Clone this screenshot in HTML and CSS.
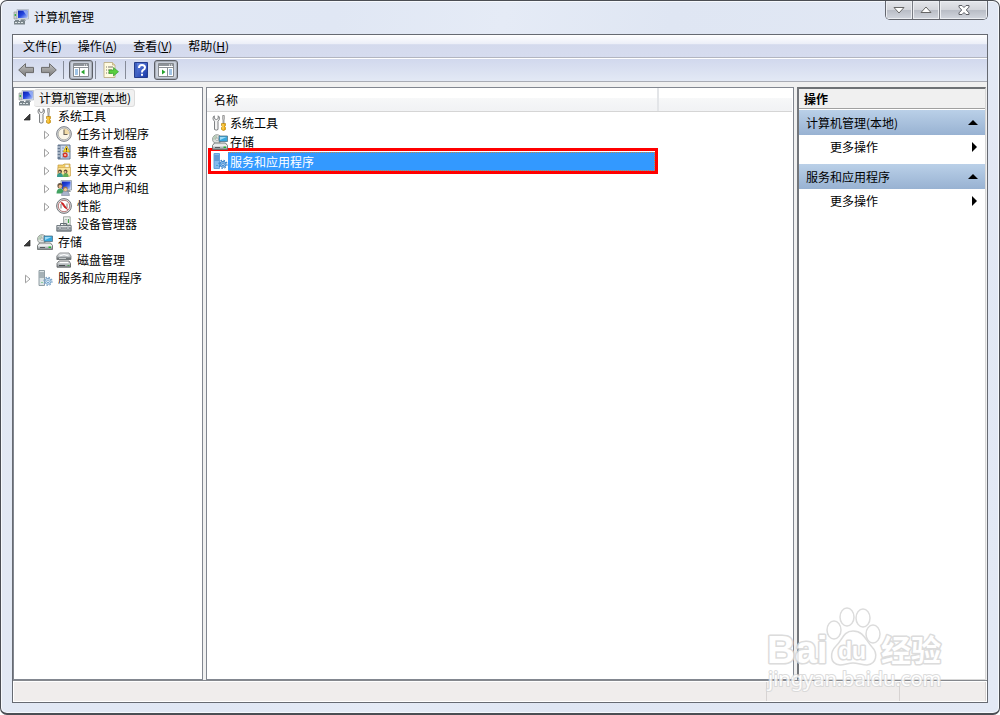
FILE: index.html
```html
<!DOCTYPE html>
<html lang="zh-CN">
<head>
<meta charset="utf-8">
<title>计算机管理</title>
<link rel="stylesheet" href="styles.css">
</head>
<body>
<svg class="sprite" aria-hidden="true">
  <defs>
    <linearGradient id="g-screen" x1="0" y1="0" x2="1" y2="1"><stop offset="0" stop-color="#0a1fae"/><stop offset=".5" stop-color="#2547e0"/><stop offset="1" stop-color="#b8cdfa"/></linearGradient>
    <linearGradient id="g-arrow" x1="0" y1="0" x2="0" y2="1"><stop offset="0" stop-color="#c4c4c4"/><stop offset="1" stop-color="#777"/></linearGradient>
    <linearGradient id="g-help" x1="0" y1="0" x2="1" y2="1"><stop offset="0" stop-color="#6a8be6"/><stop offset="1" stop-color="#1535a5"/></linearGradient>
    <linearGradient id="g-metal" x1="0" y1="0" x2="0" y2="1"><stop offset="0" stop-color="#f2f4f5"/><stop offset="1" stop-color="#858c91"/></linearGradient>
    <symbol id="computer" viewBox="0 0 16 16">
      <path d="M1 3h3v7H1z" fill="#c9cfcd" stroke="#8a918f" stroke-width=".6"/><path d="M1.600 5h1.500v2H1.600z" fill="#39b54a"/>
      <path d="M4 .5h11.500V10H4z" fill="#dde2e8" stroke="#a9b1bb" stroke-width=".7"/><path d="M5 1.500h9.500V9H5z" fill="url(#g-screen)"/><path d="M10 1.500L14.500 8V1.500z" fill="#8fa9f3"/>
      <path d="M8 10h4l1 2H7z" fill="#9ba4aa"/><path d="M2 11h4v1h2v-1h3v1h1v3.500H1V12h1z" fill="#7b868c"/><path d="M2 13h2v1H2zm3 0h2v1H5zm3 0h2v1H8z" fill="#dde4e6"/>
    </symbol>
    <symbol id="tools" viewBox="0 0 16 16">
      <path d="M2.300.8C.6 1.800.5 4.800 2.500 6.200V14.500q1.700 1.300 3.500 0V6.200C8 4.800 7.900 1.800 6.200.8V3.600L4.300 4.600 2.300 3.600z" fill="#f4f4f4" stroke="#6f7375" stroke-width=".9"/>
      <path d="M10.700.5h1.600v3.500l-.3 1v3.500h-1V5l-.3-1z" fill="#e4e4e4" stroke="#777" stroke-width=".7"/><path d="M9.500 8.500h4v2l-.8 1 .8 1v2q-2 2-4 0v-2l.8-1-.8-1z" fill="#f0ad12" stroke="#b07c00" stroke-width=".6"/><path d="M11 9v5.500" stroke="#ffe27b"/>
    </symbol>
    <symbol id="clock" viewBox="0 0 16 16">
      <circle cx="8" cy="8" r="7.400" fill="#d3d6d9" stroke="#777b81" stroke-width=".9"/><circle cx="8" cy="8" r="5.800" fill="#faf6e8" stroke="#a6a6a0" stroke-width=".7"/><path d="M8 8V2.500A5.500 5.500 0 0 1 13.400 8z" fill="#edcc83" opacity=".65"/><path d="M8 3.500v5h3.500" fill="none" stroke="#6b6459" stroke-width="1.100"/>
    </symbol>
    <symbol id="events" viewBox="0 0 16 16">
      <path d="M2 1h12v14H2z" fill="#c9d7ec" stroke="#526783" stroke-width=".9"/><path d="M2 1h2.500v14H2z" fill="#657991"/><path d="M1 3h3M1 6h3M1 9h3M1 12h3" stroke="#e2e9f1"/><path d="M6 4h2M6 7h1M6 10h2M6 13h7" stroke="#6c8db9" stroke-width=".8"/>
      <path d="M10.500 1.800L14 8H7z" fill="#ffda29" stroke="#a88816" stroke-width=".6"/><path d="M10.500 4v2.200m0 .5v.8" stroke="#222" stroke-width=".9"/><circle cx="9.200" cy="11" r="2.500" fill="#d63224"/><path d="M8.200 10l2 2m0-2l-2 2" stroke="#fff" stroke-width=".7"/>
    </symbol>
    <symbol id="shared" viewBox="0 0 16 16">
      <path d="M2 3h5l1-1h6v12H2z" fill="#f2cf68" stroke="#c39a3c" stroke-width=".7"/><path d="M9 2.500h4V6H9z" fill="#f9f6e7" stroke="#cdaa51" stroke-width=".5"/><path d="M2 5.500h12.500V14H2z" fill="#fbe49a" stroke="#cca047" stroke-width=".6"/>
      <path d="M1 15q0-4 3-4t3 4z" fill="#369c91"/><path d="M7 15q0-4 2.800-4t2.700 4z" fill="#63ac55"/><circle cx="4" cy="9.500" r="1.900" fill="#544232"/><circle cx="9.600" cy="9.500" r="1.900" fill="#6b5037"/><circle cx="3.700" cy="10" r="1.100" fill="#e9c29b"/><circle cx="9.300" cy="10" r="1.100" fill="#e9c29b"/>
    </symbol>
    <symbol id="users" viewBox="0 0 16 16">
      <path d="M5 .5h10.500V10H5z" fill="#d5dce4" stroke="#8d99a7" stroke-width=".8"/><path d="M6 1.500h8.500V9H6z" fill="url(#g-screen)"/><path d="M10.500 10h3l1.500 2h-5z" fill="#8b969d"/>
      <path d="M.5 13.500q.2-5 3.800-5 3.200 0 3.700 5z" fill="#42a261"/><circle cx="4" cy="5.700" r="2.600" fill="#6d5842"/><circle cx="4.300" cy="6.500" r="1.700" fill="#e9b486"/><path d="M5.500 15.500q.4-4.500 4-4.500t4 4.500z" fill="#a9b4cc" stroke="#687487" stroke-width=".5"/><circle cx="9.300" cy="9" r="2.400" fill="#9b7951"/><circle cx="9.500" cy="9.600" r="1.600" fill="#f0c59b"/>
    </symbol>
    <symbol id="performance" viewBox="0 0 16 16">
      <circle cx="8" cy="8" r="7.400" fill="#dcdedf" stroke="#65696d" stroke-width=".9"/><circle cx="8" cy="8" r="5.700" fill="#fff" stroke="#a54b4b" stroke-width=".7"/><path d="M5 10.500V6m6 4V5.500" stroke="#666" stroke-width=".9"/><path d="M5 4.500l2 .5 4.500 6.500-3-2z" fill="#d21d1d" stroke="#c41919" stroke-width=".7"/>
    </symbol>
    <symbol id="device" viewBox="0 0 16 16">
      <path d="M7.500.8h6.700V9H7.500z" fill="#edf2ee" stroke="#8b9691" stroke-width=".8"/><path d="M9 3.500h2V9H9z" fill="#fff" stroke="#7d8983" stroke-width=".5"/><path d="M12 3h1v4h-1z" fill="#43a94b"/><path d="M4.500 9.500v-2h6v2" fill="none" stroke="#656e75"/><path d="M.8 9.500h14.400v5.700H.8z" fill="url(#g-metal)" stroke="#535e66" stroke-width=".8"/><path d="M1 12h14" stroke="#59636a" stroke-width=".7"/><path d="M3 11h2v2H3zm8 0h2v2h-2z" fill="#e6eaec" stroke="#59636a" stroke-width=".4"/>
    </symbol>
    <symbol id="storage" viewBox="0 0 16 16">
      <circle cx="5" cy="5.200" r="4.500" fill="#dde0de" stroke="#858b88" stroke-width=".8"/><path d="M5 .9A4.300 4.300 0 0 0 1 6l4-1z" fill="#b9ccb8"/><circle cx="5" cy="5.200" r="1.300" fill="#fff" stroke="#868b87" stroke-width=".6"/><path d="M7 2h8.500v5.500H7z" fill="#37a7dd" stroke="#537487" stroke-width=".8"/><path d="M8 3h6.500L8 6z" fill="#9fdcf7"/>
      <path d="M2.500 9h11l2 2.500v4H.5v-4z" fill="#e6e8e8" stroke="#59615f" stroke-width=".8"/><path d="M1 11.500h14V15H1z" fill="url(#g-metal)"/><path d="M11.500 12.500h2.500v1.500h-2.500z" fill="#21b830"/><path d="M3 13.500h5" stroke="#555c60"/>
    </symbol>
    <symbol id="disk" viewBox="0 0 16 16">
      <path d="M3.500 1h9.500l2 3v3.500H.8V4z" fill="url(#g-metal)" stroke="#777a7c" stroke-width=".8"/><path d="M3.500 4q4.500-3 9 0" fill="none" stroke="#fff"/><path d="M1 5.500h14V8H1z" fill="#74797b"/><path d="M3 6.500h7" stroke="#d6d9da" stroke-width=".8"/>
      <path d="M3 9h10l1.500 2.500v3.700H1v-3.700z" fill="url(#g-metal)" stroke="#55595b" stroke-width=".8"/><path d="M4 10.500h8" stroke="#fff"/><path d="M3 13.500h6" stroke="#474b4d"/><path d="M11.500 13h2v1h-2z" fill="#4aa350"/>
    </symbol>
    <symbol id="services" viewBox="0 0 16 16">
      <path d="M2 .5h5.500v15H2z" fill="#dce4e6" stroke="#86949b" stroke-width=".9"/><path d="M2.500 3h4.500M2.500 5h4.500M2.500 7h4.500" stroke="#63747d" stroke-width=".9"/><path d="M4.500 12h1v1h-1z" fill="#3ab655"/><circle cx="11" cy="11.300" r="3" fill="#d9ecfc" stroke="#7ba4c8"/><circle cx="11" cy="11.300" r="4" fill="none" stroke="#7ba4c8" stroke-width="1.200" stroke-dasharray="1.570 1.570"/><circle cx="11" cy="11.300" r="1.300" fill="#fff" stroke="#5b91bf" stroke-width=".8"/>
    </symbol>
    <symbol id="services-selected" viewBox="0 0 16 16">
      <path d="M2 .5h5.500v15H2z" fill="#85bbef" stroke="#5a9ad8" stroke-width=".9"/><path d="M2.500 3h4.500M2.500 5h4.500M2.500 7h4.500" stroke="#3474b5" stroke-width=".9"/><path d="M4.500 12h1v1h-1z" fill="#1d9b9d"/><circle cx="11" cy="11.300" r="3" fill="#90c5f6" stroke="#3f86cb"/><circle cx="11" cy="11.300" r="4" fill="none" stroke="#3f86cb" stroke-width="1.200" stroke-dasharray="1.570 1.570"/><circle cx="11" cy="11.300" r="1.300" fill="#c5e2ff" stroke="#3478bb" stroke-width=".8"/>
    </symbol>
    <symbol id="back" viewBox="0 0 16 16"><path d="M.7 8L7.500 1.700v3.700h8v5.200h-8v3.700z" fill="url(#g-arrow)" stroke="#6b6b6b" stroke-linejoin="round"/></symbol>
    <symbol id="forward" viewBox="0 0 16 16"><path d="M15.300 8L8.500 1.700v3.700h-8v5.200h8v3.700z" fill="url(#g-arrow)" stroke="#6b6b6b" stroke-linejoin="round"/></symbol>
    <symbol id="tree-pane" viewBox="0 0 16 16"><path d="M.5 1.500h15v13H.5z" fill="#fff" stroke="#85898e"/><path d="M1 2h14v2H1z" fill="#8e9399"/><path d="M11 3h1m1 0h1" stroke="#fff"/><path d="M1 5.500h14M6.500 6v8" stroke="#8b9096"/><path d="M2 8h3M2 10h3M2 12h3" stroke="#4289cc"/><path d="M11.500 7.500v5L8 10z" fill="#27a32d"/></symbol>
    <symbol id="action-pane" viewBox="0 0 16 16"><path d="M.5 1.500h15v13H.5z" fill="#fff" stroke="#85898e"/><path d="M1 2h14v2H1z" fill="#8e9399"/><path d="M11 3h1m1 0h1" stroke="#fff"/><path d="M1 5.500h14M9.500 6v8" stroke="#8b9096"/><path d="M11 8h3m-3 2h3m-3 2h3" stroke="#4289cc"/><path d="M4 7.500v5L7.500 10z" fill="#27a32d"/></symbol>
    <symbol id="export" viewBox="0 0 16 16"><path d="M1 .5h8.500L12 3v12.500H1z" fill="#fffbe0" stroke="#b5a77b" stroke-width=".8"/><path d="M9.500.5V3H12" fill="#eadca7" stroke="#b5a77b" stroke-width=".7"/><path d="M3 5h1m1 0h5M3 8h1m1 0h4M3 11h1m1 0h4" stroke="#78766f"/><path d="M6 8h4.500V5.500l5 4.200-5 4.300v-2.600H6z" fill="#59cf3f" stroke="#299626" stroke-width=".6"/></symbol>
    <symbol id="help" viewBox="0 0 16 16"><path d="M1.500.5h13v15h-13z" fill="url(#g-help)" stroke="#243c8c"/><path d="M2 1h2v14H2z" fill="#4062bf"/><path d="M6 6q0-3 3-3t3 2.500q0 1.500-2 2.600Q9 9 9 10.400" fill="none" stroke="#fff" stroke-width="2"/><path d="M8 11.700h2v2H8z" fill="#fff"/></symbol>
    <symbol id="closed" viewBox="0 0 8 10"><path d="M2.500 1.200L7 5 2.500 8.800z" fill="#fff" stroke="#a0a0a0"/></symbol>
    <symbol id="open" viewBox="0 0 8 10"><path d="M7 2v6H1z" fill="#3c3c3c" stroke="#222" stroke-width=".7"/></symbol>
  </defs>
</svg>

<div class="window">
  <header class="titlebar">
    <svg class="icon"><use href="#computer"/></svg>
    <h1 class="title">计算机管理</h1>
    <div class="controls">
      <button class="control" aria-label="最小化"><svg width="14" height="10" viewBox="0 0 14 10"><path d="M2 2.500h10L7 8z" fill="#fff" stroke="#666"/></svg></button>
      <button class="control" aria-label="最大化"><svg width="14" height="10" viewBox="0 0 14 10"><path d="M2 7.500h10L7 2z" fill="#fff" stroke="#666"/></svg></button>
      <button class="control control-close" aria-label="关闭"><svg width="14" height="12" viewBox="0 0 14 12"><path d="M2 1.500h3l2 2 2-2h3v1.600L9.300 6 12 8.900v1.600H9l-2-2-2 2H2V8.900L4.700 6 2 3.100z" fill="#fff" stroke="#5d5f66"/></svg></button>
    </div>
  </header>

  <div class="client">
    <nav class="menubar" aria-label="菜单">
      <button class="menu">文件(<u>F</u>)</button>
      <button class="menu">操作(<u>A</u>)</button>
      <button class="menu">查看(<u>V</u>)</button>
      <button class="menu">帮助(<u>H</u>)</button>
    </nav>
    <div class="toolbar" role="toolbar" aria-label="工具栏">
      <button class="tool" aria-label="后退"><svg class="icon"><use href="#back"/></svg></button>
      <button class="tool" aria-label="前进"><svg class="icon"><use href="#forward"/></svg></button>
      <span class="divider"></span>
      <button class="tool tool-on" aria-label="显示/隐藏控制台树"><svg class="icon"><use href="#tree-pane"/></svg></button>
      <span class="divider"></span>
      <button class="tool tool-export" aria-label="导出列表"><svg class="icon"><use href="#export"/></svg></button>
      <span class="divider"></span>
      <button class="tool tool-last" aria-label="帮助"><svg class="icon"><use href="#help"/></svg></button>
      <button class="tool tool-on" aria-label="显示/隐藏操作窗格"><svg class="icon"><use href="#action-pane"/></svg></button>
    </div>

    <main class="panes">
      <nav class="pane tree" aria-label="控制台树">
        <button class="node node-root"><svg class="icon"><use href="#computer"/></svg><span class="node-text">计算机管理(本地)</span></button>
        <ul class="branch branch-top">
          <li>
            <button class="node"><svg class="twisty"><use href="#open"/></svg><svg class="icon"><use href="#tools"/></svg><span class="node-text">系统工具</span></button>
            <ul class="branch">
              <li><button class="node"><svg class="twisty"><use href="#closed"/></svg><svg class="icon"><use href="#clock"/></svg><span class="node-text">任务计划程序</span></button></li>
              <li><button class="node"><svg class="twisty"><use href="#closed"/></svg><svg class="icon"><use href="#events"/></svg><span class="node-text">事件查看器</span></button></li>
              <li><button class="node"><svg class="twisty"><use href="#closed"/></svg><svg class="icon"><use href="#shared"/></svg><span class="node-text">共享文件夹</span></button></li>
              <li><button class="node"><svg class="twisty"><use href="#closed"/></svg><svg class="icon"><use href="#users"/></svg><span class="node-text">本地用户和组</span></button></li>
              <li><button class="node"><svg class="twisty"><use href="#closed"/></svg><svg class="icon"><use href="#performance"/></svg><span class="node-text">性能</span></button></li>
              <li><button class="node"><svg class="twisty"></svg><svg class="icon"><use href="#device"/></svg><span class="node-text">设备管理器</span></button></li>
            </ul>
          </li>
          <li>
            <button class="node"><svg class="twisty"><use href="#open"/></svg><svg class="icon"><use href="#storage"/></svg><span class="node-text">存储</span></button>
            <ul class="branch">
              <li><button class="node"><svg class="twisty"></svg><svg class="icon"><use href="#disk"/></svg><span class="node-text">磁盘管理</span></button></li>
            </ul>
          </li>
          <li><button class="node"><svg class="twisty"><use href="#closed"/></svg><svg class="icon"><use href="#services"/></svg><span class="node-text">服务和应用程序</span></button></li>
        </ul>
      </nav>

      <section class="pane list" aria-label="内容">
        <div class="list-head"><span class="column">名称</span></div>
        <div class="rows">
          <button class="row"><svg class="icon"><use href="#tools"/></svg><span class="row-text">系统工具</span></button>
          <button class="row"><svg class="icon"><use href="#storage"/></svg><span class="row-text">存储</span></button>
          <button class="row row-selected"><svg class="icon"><use href="#services-selected"/></svg><span class="row-text">服务和应用程序</span></button>
        </div>
      </section>

      <aside class="pane actions">
        <h2 class="actions-title">操作</h2>
        <section class="group">
          <button class="group-head">计算机管理(本地)<svg width="10" height="5"><path d="M0 5h10L5 0z"/></svg></button>
          <button class="action">更多操作<svg width="5" height="10"><path d="M0 0v10l5-5z"/></svg></button>
        </section>
        <section class="group">
          <button class="group-head">服务和应用程序<svg width="10" height="5"><path d="M0 5h10L5 0z"/></svg></button>
          <button class="action">更多操作<svg width="5" height="10"><path d="M0 0v10l5-5z"/></svg></button>
        </section>
      </aside>
    </main>

    <footer class="status"><span class="cell cell-main"></span><span class="cell cell-mid"></span><span class="cell cell-end"></span></footer>
  </div>

  <svg class="watermark" width="184" height="90" viewBox="0 0 184 90">
    <g fill="#fff" stroke="#d6d6d6" stroke-width="1.500">
      <ellipse cx="71" cy="34" rx="7" ry="9"/><ellipse cx="84" cy="21" rx="7" ry="9"/><ellipse cx="100" cy="22" rx="7" ry="9"/><ellipse cx="110" cy="38" rx="7" ry="9"/>
      <path d="M90 35c-10 0-11 10-17 15-6 6-7 18 4 19 5 0 8-2 13-2s9 2 14 2c10-1 11-12 5-18-6-6-8-16-19-16z"/>
      <text class="mark mark-latin" x="4" y="67">Bai</text>
      <text class="mark mark-du" x="75" y="63">du</text>
      <text class="mark mark-cjk" x="118" y="65">经验</text>
      <text class="mark mark-url" x="5" y="90">jingyan.baidu.com</text>
    </g>
  </svg>
</div>
</body>
</html>
```
FILE: styles.css
```css
* {
  box-sizing: border-box;
}

body {
  margin: 0;
  background: #fff;
  color: #000;
  font: 12px/18px "Noto Sans CJK SC", "Noto Sans", sans-serif;
}

button {
  display: flex;
  align-items: center;
  margin: 0;
  padding: 0;
  border: 0;
  background: none;
  color: inherit;
  font: inherit;
  text-align: left;
  white-space: nowrap;
}

ul {
  margin: 0;
  padding: 0;
  list-style: none;
}

.sprite {
  position: absolute;
  width: 0;
  height: 0;
}

.icon {
  flex: none;
  width: 16px;
  height: 16px;
}

.window {
  position: relative;
  display: flex;
  flex-direction: column;
  min-height: 100vh;
  padding: 0 11px 10px;
  border: 1px solid #4b4e54;
  border-bottom-width: 2px;
  border-radius: 7px;
  background: linear-gradient(100deg, #e3e9f4 0%, #e0e7f4 30%, #e5ebf6 45%, #dfe6f3 60%, #e3e9f5 100%);
  box-shadow: inset 0 0 0 1px #f6f9fd;
}

/* Title bar */

.titlebar {
  display: flex;
  align-items: flex-start;
  height: 33px;
}

.titlebar > .icon {
  margin: 8px 5px 0 1px;
}

.title {
  flex: 1;
  margin: 7px 0 0;
  font-size: 12px;
  font-weight: 400;
}

.controls {
  display: flex;
  height: 19px;
  overflow: hidden;
  border: 1px solid #64676f;
  border-top: 0;
  border-radius: 0 0 5px 5px;
}

.control {
  justify-content: center;
  width: 27px;
  border-right: 1px solid #777a82;
  background: linear-gradient(#e4e6eb 0%, #d3d5db 48%, #b9bdc6 52%, #d2d6de 100%);
  box-shadow: inset 0 0 0 1px #eceef2;
}

.control-close {
  width: 47px;
  border-right: 0;
}

/* Client area */

.client {
  flex: 1;
  display: flex;
  flex-direction: column;
  border: 1px solid #666a72;
  background: #f0f0f0;
}

.menubar {
  display: flex;
  gap: 16px;
  height: 23px;
  padding: 0 10px;
  border-bottom: 1px solid #b2b5c0;
  background: linear-gradient(#fff 0%, #eceff8 40%, #d4daed 44%, #d6dcef 100%);
}

.toolbar {
  display: flex;
  align-items: center;
  height: 24px;
  padding: 0 5px;
  border-top: 1px solid #fff;
  border-bottom: 1px solid #a9acb5;
  background: linear-gradient(#d1d8ed, #e3e9f5);
}

.tool {
  justify-content: center;
  margin-right: 7px;
}

.tool-export {
  margin-right: 6px;
}

.tool-last {
  margin-right: 5px;
}

.tool-on {
  width: 24px;
  height: 20px;
  margin-right: 2px;
  border: 1px solid #5d6067;
  border-radius: 3px;
  background: #ccd2dd;
  box-shadow: inset 0 0 1px 1px #a4a9b3;
}

.divider {
  width: 1px;
  height: 18px;
  margin-right: 7px;
  background: #858b98;
}

.tool:first-child + .tool {
  margin-right: 6px;
}

.divider + .tool-on {
  margin-left: -2px;
}

.panes {
  flex: 1;
  display: grid;
  grid-template-columns: 190px minmax(0, 1fr) 189px;
  gap: 3px;
  padding: 5px 1px 0 0;
}

.pane {
  border: 1px solid #828790;
  background: #fff;
}

/* Console tree */

.tree {
  padding: 1px 0 0 4px;
}

.node {
  height: 18px;
}

.twisty {
  flex: none;
  width: 8px;
  height: 10px;
  margin: 2px 6px 0 5px;
}

.node-text {
  padding-left: 5px;
}

.node-root .node-text {
  padding-right: 3px;
  border: 1px solid #dcdcdc;
  border-left: 0;
  border-radius: 3px;
  background: #f1f1f1;
  line-height: 16px;
}

.branch {
  padding-left: 19px;
}

.branch-top {
  padding-left: 0;
}

/* Item list */

.list-head {
  display: flex;
  height: 24px;
  margin-right: 1px;
  border-bottom: 1px solid #d5d5d5;
  background: linear-gradient(#fff 0%, #fff 42%, #f6f7f8 46%, #f1f2f4 100%);
}

.column {
  flex: 0 0 452px;
  padding: 3px 7px;
  border-right: 2px solid #e3e5e8;
}

.rows {
  padding: 1px 0 0 1px;
}

.row {
  width: 450px;
  height: 19px;
  padding-left: 4px;
}

.row-text {
  flex: 1;
  padding-left: 2px;
  line-height: 19px;
}

.row-selected {
  height: 26px;
  margin-top: -3px;
  padding-left: 1px;
  border: 3px solid #f00;
}

.row-selected .row-text {
  border: 1px dotted #c98445;
  border-left-width: 0;
  background: #39f;
  color: #fff;
  line-height: 17px;
}

/* Actions */

.actions {
  border-top: 2px solid #6e7175;
  border-left: 2px solid #73767b;
  border-right-color: #d8d8d8;
  border-bottom-color: #d8d8d8;
}

.actions-title {
  height: 20px;
  margin: 0 0 1px;
  padding: 1px 5px;
  border-bottom: 1px solid #a0a0a0;
  background: #f0f0f0;
  font-size: 12px;
  font-weight: 700;
}

.group {
  margin-bottom: 5px;
}

.group-head,
.action {
  justify-content: space-between;
  width: 100%;
  padding: 0 7px;
}

.group-head {
  height: 25px;
  background: linear-gradient(#bad0e8, #98b2d2);
}

.action {
  height: 24px;
  padding: 0 8px 0 31px;
}

/* Status bar */

.status {
  display: flex;
  height: 22px;
  padding: 1px;
  border-top: 1px solid #85888d;
  background: #fff;
}

.cell {
  border-right: 1px solid #d7d3d2;
  background: #f0edec;
}

.cell-main {
  flex: 1;
}

.cell-mid {
  width: 133px;
}

.cell-end {
  width: 86px;
}

/* Watermark */

.watermark {
  position: absolute;
  right: 52px;
  bottom: 27px;
  overflow: visible;
  opacity: 0.85;
}

.mark {
  paint-order: stroke;
  stroke-width: 3px;
  stroke-linejoin: round;
}

.mark-latin {
  font: 700 39px "Liberation Sans", sans-serif;
}

.mark-du {
  font: 700 23px "Liberation Sans", sans-serif;
}

.mark-cjk {
  font: 700 30px "Noto Sans CJK SC", sans-serif;
}

.mark-url {
  stroke-width: 2px;
  font: 400 20px "Noto Sans", sans-serif;
}
```
